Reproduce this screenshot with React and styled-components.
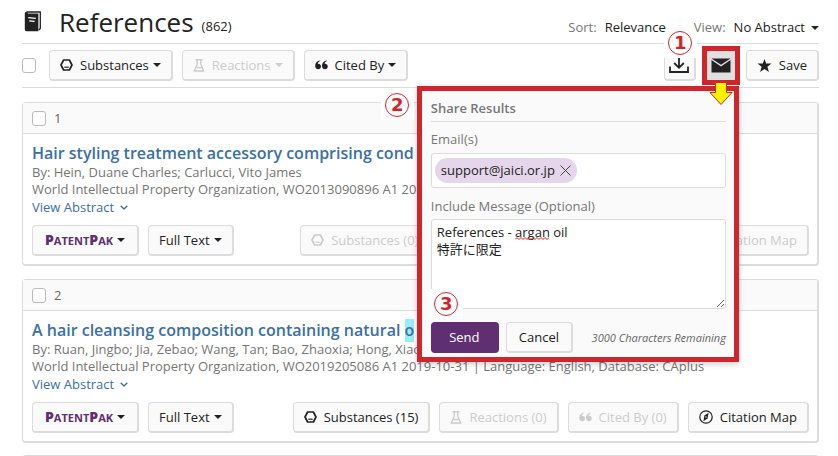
import React from "react";
import styled, { createGlobalStyle, css } from "styled-components";

const GlobalStyle = createGlobalStyle`
  * {
    box-sizing: border-box;
  }

  body {
    margin: 0;
    background: #fff;
    color: #222;
    font-family: "Open Sans", "Noto Sans CJK JP", sans-serif;
    font-size: 13px;
    line-height: 17px;
    overflow: hidden;
  }

  button, input, select, textarea {
    font: inherit;
    color: inherit;
  }
`;

const Page = styled.main`
  padding: 0 19px 0 22px;
`;

const Header = styled.header`
  display: flex;
  align-items: center;
  height: 44px;
  border-bottom: 1px solid #dcdcdc;

  > svg {
    margin-left: 2px;
  }
`;

const Title = styled.h1`
  margin: 0 0 0 17px;
  font-size: 26px;
  line-height: 42px;
  font-weight: 500;
`;

const Count = styled.span`
  margin-left: 8px;
  padding-top: 10px;
`;

const Options = styled.div`
  position: relative;
  z-index: 4;
  display: flex;
  align-items: center;
  margin-left: auto;
  padding-top: 12px;
`;

const Option = styled.label`
  display: flex;
  align-items: center;
  margin-left: 28px;
  color: #777;

  svg {
    margin-left: 6px;
    color: #222;
  }
`;

const Select = styled.select`
  appearance: none;
  field-sizing: content;
  margin-left: 8px;
  padding: 0;
  border: none;
  background: none;
  color: #222;
`;

const Toolbar = styled.div`
  display: flex;
  align-items: center;
  gap: 9px;
  height: 44px;
  border-bottom: 1px solid #dcdcdc;
`;

const Checkbox = styled.input`
  appearance: none;
  width: 14px;
  height: 15px;
  margin: 0;
  border: 1px solid #bbb;
  border-radius: 3px;
  background: #fff;
  margin-right: ${(props) => (props.$spaced ? "4px" : "0")};
`;

const Button = styled.button`
  display: flex;
  align-items: center;
  justify-content: center;
  height: 31px;
  padding: 0 10px;
  border: 1px solid #dcdcdc;
  border-right-width: 2px;
  border-bottom-width: 2px;
  border-radius: 4px;
  background: #fafafa;
  color: #222;
  white-space: nowrap;

  > svg + span {
    margin-left: 7px;
  }

  > span + svg {
    margin-left: 4px;
  }

  &:disabled {
    color: #ccc;
  }

  ${(props) =>
    props.$wide &&
    css`
      padding: 0 12px;
    `}

  ${(props) =>
    props.$primary &&
    css`
      width: 68px;
      border-color: #5f2f72;
      background: #5f2f72;
      color: #fff;
    `}
`;

const IconButton = styled.button`
  display: flex;
  align-items: center;
  justify-content: center;
  width: 32px;
  height: 31px;
  padding: 0;
  border: 1px solid #dcdcdc;
  border-right-width: 2px;
  border-bottom-width: 2px;
  border-radius: 4px;
  background: #fafafa;
`;

const MailButton = styled(IconButton)`
  width: 38px;
  height: 39px;
  border: 5px solid #d0252d;
  border-radius: 0;
  background: #e0e0e0;
`;

const Actions = styled.div`
  display: flex;
  align-items: center;
  gap: 6px;
  margin-left: auto;
`;

const Anchor = styled.div`
  position: relative;
`;

const Arrow = styled.svg`
  position: absolute;
  top: 35px;
  left: 6px;
  z-index: 3;
`;

const Callout = styled.span`
  position: absolute;
  display: flex;
  align-items: center;
  justify-content: center;
  width: 33px;
  height: 30px;
  background: #fff;
  z-index: 3;

  span {
    width: 24px;
    height: 24px;
    border: 1px solid #d0252d;
    border-radius: 50%;
    color: #d0252d;
    font-family: "DejaVu Sans", sans-serif;
    font-size: 18px;
    font-weight: bold;
    line-height: 22px;
    text-align: center;
  }
`;

const DownloadCallout = styled(Callout)`
  top: -22px;
  left: 0;
`;

const PanelCallout = styled(Callout)`
  top: -1px;
  left: -41px;
`;

const SendCallout = styled(Callout)`
  bottom: -10px;
  left: -1px;
`;

const Popover = styled.form`
  position: absolute;
  top: 40px;
  right: 1px;
  z-index: 2;
  width: 322px;
  padding: 9px 8px 4px 9px;
  border: 5px solid #d0252d;
  background: #fafafa;
  box-shadow: 0 2px 6px rgba(0, 0, 0, 0.2);
`;

const PopoverTitle = styled.h2`
  margin: 0 0 9px;
  padding-bottom: 4px;
  border-bottom: 1px solid #dcdcdc;
  color: #777;
  font-size: 13px;
  font-weight: 600;
`;

const Label = styled.label`
  display: block;
  color: #777;
`;

const EmailField = styled.div`
  display: flex;
  align-items: center;
  height: 35px;
  margin: 5px 0 10px;
  padding: 0 3px;
  border: 1px solid #dcdcdc;
  border-radius: 3px;
  background: #fff;
`;

const Pill = styled.span`
  display: flex;
  align-items: center;
  gap: 5px;
  height: 25px;
  padding: 0 6px;
  border-radius: 13px;
  background: #e6d6ec;
`;

const PillRemove = styled.button`
  display: flex;
  padding: 0;
  border: none;
  background: none;
`;

const EmailInput = styled.input`
  flex: 1;
  min-width: 0;
  border: none;
  outline: none;
  background: none;
`;

const MessageBox = styled.div`
  position: relative;
  height: 90px;
  margin: 4px 0 13px;
`;

const Message = styled.textarea`
  display: block;
  width: 100%;
  height: 100%;
  padding: 4px 5px;
  border: 1px solid #dcdcdc;
  border-radius: 3px;
  background: #fff;
  outline: none;
`;

const Squiggle = styled.svg`
  position: absolute;
  top: 18px;
  left: 84px;
`;

const Footer = styled.div`
  display: flex;
  align-items: center;
  gap: 7px;
`;

const Remaining = styled.em`
  margin-left: auto;
  color: #666;
  font-size: 11px;
`;

const Card = styled.article`
  margin-top: 14px;
  border: 1px solid #dcdcdc;
  border-right-width: 2px;
  border-bottom-width: 2px;
  border-radius: 4px;

  & + & {
    margin-top: 13px;
  }
`;

const CardHeader = styled.label`
  display: flex;
  align-items: center;
  gap: 8px;
  height: 31px;
  padding: 0 9px;
  border-bottom: 1px solid #dcdcdc;
  background: #fafafa;
  color: #666;
`;

const CardBody = styled.div`
  padding: 9px 8px 8px 9px;
`;

const CardTitle = styled.a`
  display: block;
  margin-bottom: 1px;
  color: #3a70a3;
  font-size: 16px;
  font-weight: 600;
  line-height: 20px;
  text-decoration: none;
  white-space: nowrap;

  mark {
    padding-bottom: 1px;
    background: #97eef8;
    color: inherit;
  }
`;

const Meta = styled.p`
  margin: 0;
  color: #757575;
  white-space: nowrap;
`;

const AbstractLink = styled.a`
  display: flex;
  align-items: center;
  gap: 6px;
  margin-top: 1px;
  color: #3a70a3;
  text-decoration: none;
`;

const CardActions = styled.div`
  display: flex;
  gap: 9px;
  margin-top: 9px;
`;

const Spacer = styled.span`
  flex: 1;
`;

const PatentPak = styled.span`
  color: #5f2f72;
  font-size: 11px;
  font-weight: 700;

  b {
    font-size: 14px;
  }
`;

const NextCard = styled.div`
  height: 12px;
  margin-top: 12px;
  border: 1px solid #dcdcdc;
  border-bottom: none;
  border-radius: 4px 4px 0 0;
`;

const Caret = () => (
  <svg width="8" height="4" viewBox="0 0 8 4" fill="currentColor">
    <path d="M0 0h8L4 4z" />
  </svg>
);

const BookIcon = () => (
  <svg width="18" height="21" viewBox="0 0 18 21">
    <path d="M3 2.2V1h13.3v16.4l-1.5 1.6" fill="none" stroke="#222" strokeWidth="1.3" />
    <path d="M.8 2.2Q.8 1 2.3 1L4 2.6h10.4v17.6H2.5Q.8 20.2.8 18.5z" fill="#222" />
    <path d="M4.3 6.6l7.4.8M5.2 9.8l5.4.6" stroke="#fff" strokeWidth="1.3" />
  </svg>
);

const HexIcon = () => (
  <svg width="13" height="12" viewBox="0 0 13 12" fill="none" stroke="currentColor">
    <path d="M3.6 1h5.8L12 6l-2.6 5H3.6L1 6z" strokeWidth="1.7" strokeLinejoin="round" />
    <path d="M4.3 8.2h4.4" strokeWidth="1.2" />
  </svg>
);

const FlaskIcon = () => (
  <svg width="12" height="13" viewBox="0 0 12 13" fill="none" stroke="currentColor" strokeWidth="1.4">
    <path d="M2.5.8h7M4.2 1v4.2L1.3 12h9.4L7.8 5.2V1" />
    <path d="M3.4 8.6h5.2" />
  </svg>
);

const QuoteIcon = () => (
  <svg width="13" height="10" viewBox="0 0 13 10" fill="currentColor">
    <path d="M5.2 1C3.6 1.6 2.8 2.6 2.8 3.7 4.6 3.4 6 4.6 6 6.4 6 8 4.8 9.2 3.2 9.2 1.2 9.2.2 7.8.2 5.8.2 3 2 1 5.2.6z" />
    <path d="M12 1C10.4 1.6 9.6 2.6 9.6 3.7c1.8-.3 3.2.9 3.2 2.7 0 1.6-1.2 2.8-2.8 2.8C8 9.2 7 7.8 7 5.8 7 3 8.8 1 12 .6z" />
  </svg>
);

const CompassIcon = () => (
  <svg width="14" height="14" viewBox="0 0 14 14">
    <circle cx="7" cy="7" r="6.2" fill="none" stroke="currentColor" strokeWidth="1.2" />
    <path d="M9.6 2.8L8.6 8.6 4.4 11.2 5.4 5.4z" fill="currentColor" />
    <circle cx="7" cy="7" r=".7" fill="#fafafa" />
  </svg>
);

const DownloadIcon = () => (
  <svg width="20" height="16" viewBox="0 0 20 16" fill="none" stroke="#222" strokeWidth="1.8">
    <path d="M10 0v10.5M5.2 6L10 10.8 14.8 6M1 9.5V15h18V9.5" />
  </svg>
);

const MailIcon = () => (
  <svg width="20" height="15" viewBox="0 0 20 15" fill="#222">
    <path d="M.5.5h19L10 6.8z" />
    <path d="M.5 2L10 8.4 19.5 2v12.5H.5z" />
  </svg>
);

const StarIcon = () => (
  <svg width="15" height="13" viewBox="0 0 14 13" fill="currentColor">
    <path d="M7 0l1.7 4.6H14L9.9 7.8 11.4 13 7 9.9 2.6 13l1.5-5.2L0 4.6h5.3z" />
  </svg>
);

const CloseIcon = () => (
  <svg width="11" height="11" viewBox="0 0 11 11" fill="none" stroke="#444">
    <path d="M.5.5l10 10M10.5.5l-10 10" />
  </svg>
);

const ChevronIcon = () => (
  <svg width="8" height="5" viewBox="0 0 8 5" fill="none" stroke="currentColor" strokeWidth="1.3">
    <path d="M.7.7L4 4 7.3.7" />
  </svg>
);

const references = [
  {
    id: 1,
    title: "Hair styling treatment accessory comprising cond",
    authors: "By: Hein, Duane Charles; Carlucci, Vito James",
    source: "World Intellectual Property Organization, WO2013090896 A1 2013",
    substances: 0,
    hasMap: false,
  },
  {
    id: 2,
    title: "A hair cleansing composition containing natural ",
    highlight: "o",
    authors: "By: Ruan, Jingbo; Jia, Zebao; Wang, Tan; Bao, Zhaoxia; Hong, Xiaop",
    source:
      "World Intellectual Property Organization, WO2019205086 A1 2019-10-31 | Language: English, Database: CAplus",
    substances: 15,
    hasMap: true,
  },
];

const ReferenceCard = ({ item }) => (
  <Card>
    <CardHeader>
      <Checkbox type="checkbox" />
      {item.id}
    </CardHeader>
    <CardBody>
      <CardTitle href="#">
        {item.title}
        {item.highlight && <mark>{item.highlight}</mark>}
      </CardTitle>
      <Meta>{item.authors}</Meta>
      <Meta>{item.source}</Meta>
      <AbstractLink href="#">
        View Abstract <ChevronIcon />
      </AbstractLink>
      <CardActions>
        <Button $wide>
          <PatentPak>
            <b>P</b>ATENT<b>P</b>AK
          </PatentPak>
          <Caret />
        </Button>
        <Button>
          <span>Full Text</span>
          <Caret />
        </Button>
        <Spacer />
        <Button disabled={item.substances === 0}>
          <HexIcon />
          <span>Substances ({item.substances})</span>
        </Button>
        <Button disabled>
          <FlaskIcon />
          <span>Reactions (0)</span>
        </Button>
        <Button disabled>
          <QuoteIcon />
          <span>Cited By (0)</span>
        </Button>
        <Button disabled={!item.hasMap}>
          <CompassIcon />
          <span>Citation Map</span>
        </Button>
      </CardActions>
    </CardBody>
  </Card>
);

const SharePopover = () => (
  <Popover onSubmit={(e) => e.preventDefault()}>
    <PanelCallout>
      <span>2</span>
    </PanelCallout>
    <PopoverTitle>Share Results</PopoverTitle>
    <Label htmlFor="emails">Email(s)</Label>
    <EmailField>
      <Pill>
        support@jaici.or.jp
        <PillRemove type="button" aria-label="Remove">
          <CloseIcon />
        </PillRemove>
      </Pill>
      <EmailInput id="emails" type="text" />
    </EmailField>
    <Label htmlFor="message">Include Message (Optional)</Label>
    <MessageBox>
      <Message
        id="message"
        spellCheck={false}
        defaultValue={"References - argan oil\n特許に限定"}
      />
      <Squiggle width="34" height="3" viewBox="0 0 34 3" fill="none" stroke="#e02020">
        <path d="M0 2.5l2-2 2 2 2-2 2 2 2-2 2 2 2-2 2 2 2-2 2 2 2-2 2 2 2-2 2 2 2-2 2 2 2-2" />
      </Squiggle>
      <SendCallout>
        <span>3</span>
      </SendCallout>
    </MessageBox>
    <Footer>
      <Button type="submit" $primary>
        Send
      </Button>
      <Button type="button" $wide>
        Cancel
      </Button>
      <Remaining>3000 Characters Remaining</Remaining>
    </Footer>
  </Popover>
);

const App = () => {
  return (
    <Page>
      <GlobalStyle />
      <Header>
        <BookIcon />
        <Title>References</Title>
        <Count>(862)</Count>
        <Options>
          <Option>
            Sort:
            <Select>
              <option>Relevance</option>
            </Select>
          </Option>
          <Option>
            View:
            <Select>
              <option>No Abstract</option>
            </Select>
            <Caret />
          </Option>
        </Options>
      </Header>
      <Toolbar>
        <Checkbox type="checkbox" aria-label="Select all" $spaced />
        <Button>
          <HexIcon />
          <span>Substances</span>
          <Caret />
        </Button>
        <Button disabled>
          <FlaskIcon />
          <span>Reactions</span>
          <Caret />
        </Button>
        <Button>
          <QuoteIcon />
          <span>Cited By</span>
          <Caret />
        </Button>
        <Actions>
          <Anchor>
            <IconButton aria-label="Download">
              <DownloadIcon />
            </IconButton>
            <DownloadCallout>
              <span>1</span>
            </DownloadCallout>
          </Anchor>
          <Anchor>
            <MailButton aria-label="Email">
              <MailIcon />
            </MailButton>
            <Arrow width="26" height="25" viewBox="0 0 26 25">
              <path
                d="M7.5 1.5h11v10H24L13 23.5 2 11.5h5.5z"
                fill="#fff200"
                stroke="#c0302a"
              />
            </Arrow>
            <SharePopover />
          </Anchor>
          <Button>
            <StarIcon />
            <span>Save</span>
          </Button>
        </Actions>
      </Toolbar>
      {references.map((item) => (
        <ReferenceCard key={item.id} item={item} />
      ))}
      <NextCard />
    </Page>
  );
};

export default App;
